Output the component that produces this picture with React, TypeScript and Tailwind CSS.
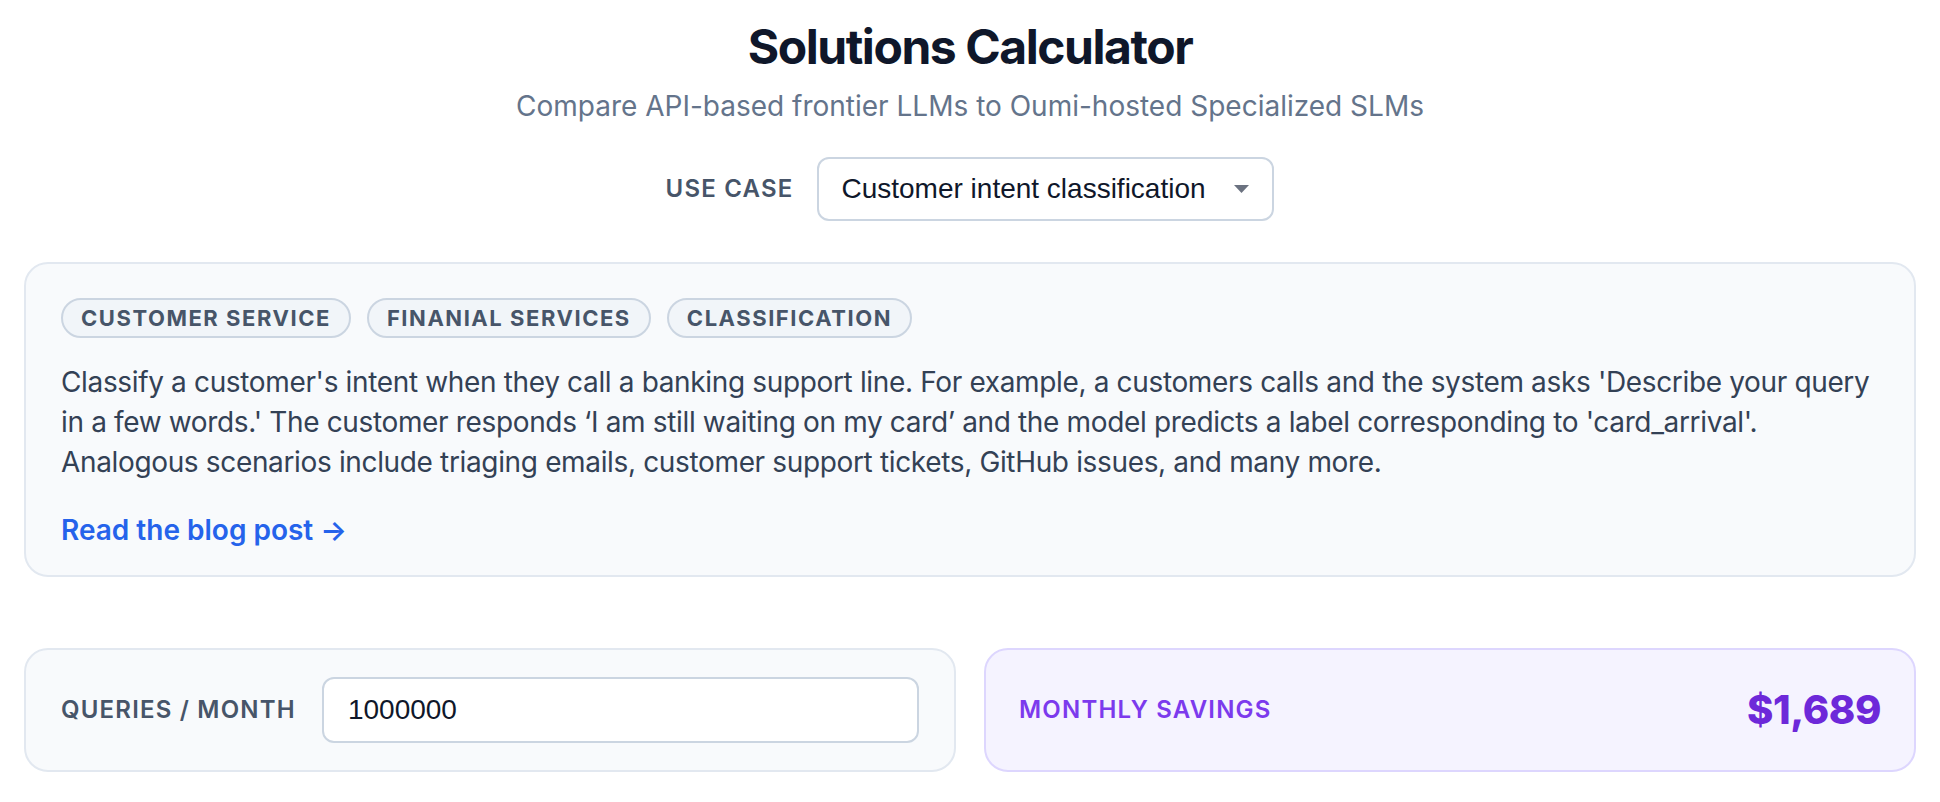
import { useState } from 'react';

const TAGS = ['Customer Service', 'Finanial Services', 'Classification'];

const USE_CASES = ['Customer intent classification', 'Document summarization', 'Entity extraction'];

export default function App() {
  const [useCase, setUseCase] = useState(USE_CASES[0]);
  const [queries, setQueries] = useState('1000000');

  return (
    <div className="min-h-screen bg-white px-6 pt-[15px] font-['Inter','Noto_Sans',sans-serif] text-[#0f172a]">
      <header className="flex flex-col items-center">
        <h1 className="text-5xl leading-[64px] font-bold tracking-[-0.03em] text-[#0f172a]">Solutions Calculator</h1>
        <p className="mt-[7px] text-[28px] leading-10 text-[#64748b]">
          Compare API-based frontier LLMs to Oumi-hosted Specialized SLMs
        </p>

        <div className="mt-[31px] flex items-center gap-6">
          <label htmlFor="use-case" className="text-2xl font-semibold tracking-wider text-[#475569]">
            USE CASE
          </label>
          <div className="relative">
            <select
              id="use-case"
              value={useCase}
              onChange={e => setUseCase(e.target.value)}
              className="h-16 w-[457px] appearance-none rounded-xl border-2 border-[#cbd5e1] bg-white pl-[22px] pr-14 font-['Liberation_Sans',Arial,sans-serif] text-[28px] text-[#0f172a] outline-none"
            >
              {USE_CASES.map(u => (
                <option key={u}>{u}</option>
              ))}
            </select>
            {/* caret */}
            <svg
              className="pointer-events-none absolute right-[25px] top-1/2 -translate-y-1/2"
              width="15"
              height="8"
              viewBox="0 0 15 8"
              aria-hidden="true"
            >
              <path d="M0 0h15L7.5 8z" fill="#6b7280" />
            </svg>
          </div>
        </div>
      </header>

      {/* Use case description */}
      <section className="mt-[41px] rounded-[24px] border-2 border-[#e2e8f0] bg-[#f8fafc] px-[35px] pt-[34px] pb-[25px]">
        <div className="flex flex-wrap gap-4">
          {TAGS.map(t => (
            <span
              key={t}
              className="flex h-10 items-center rounded-full border-2 border-[#cbd5e1] bg-[#f1f5f9] px-[18px] text-[22px] font-bold uppercase tracking-[0.07em] text-[#475569]"
            >
              {t}
            </span>
          ))}
        </div>
        <p className="mt-6 text-[28px] leading-10 tracking-[-0.35px] text-[#334155]">
          Classify a customer's intent when they call a banking support line. For example, a customers calls and the
          system asks 'Describe your query in a few words.' The customer responds ‘I am still waiting on my card’ and the
          model predicts a label corresponding to 'card_arrival'. Analogous scenarios include triaging emails, customer
          support tickets, GitHub issues, and many more.
        </p>
        <a href="#" className="mt-[28px] block text-[28px] leading-10 font-semibold text-[#2563eb]">
          Read the blog post →
        </a>
      </section>

      {/* Inputs + result */}
      <div className="mt-[71px] grid grid-cols-2 gap-[28px]">
        <div className="flex items-center gap-[26px] rounded-[24px] border-2 border-[#e2e8f0] bg-[#f8fafc] px-[35px] py-[27px]">
          <label htmlFor="queries" className="whitespace-nowrap text-2xl font-semibold tracking-wider text-[#475569]">
            QUERIES / MONTH
          </label>
          <input
            id="queries"
            value={queries}
            onChange={e => setQueries(e.target.value)}
            className="h-[66px] min-w-0 flex-1 rounded-xl border-2 border-[#cbd5e1] bg-white px-6 font-['Liberation_Sans',Arial,sans-serif] text-[28px] text-[#0f172a] outline-none"
          />
        </div>
        <div className="flex items-center justify-between rounded-[24px] border-2 border-[#ddd6fe] bg-[#f5f3ff] px-[33px]">
          <span className="text-2xl font-semibold tracking-wider text-[#7c3aed]">MONTHLY SAVINGS</span>
          <span className="text-[40px] font-extrabold tracking-[-0.01em] text-[#6d28d9]">$1,689</span>
        </div>
      </div>
    </div>
  );
}
